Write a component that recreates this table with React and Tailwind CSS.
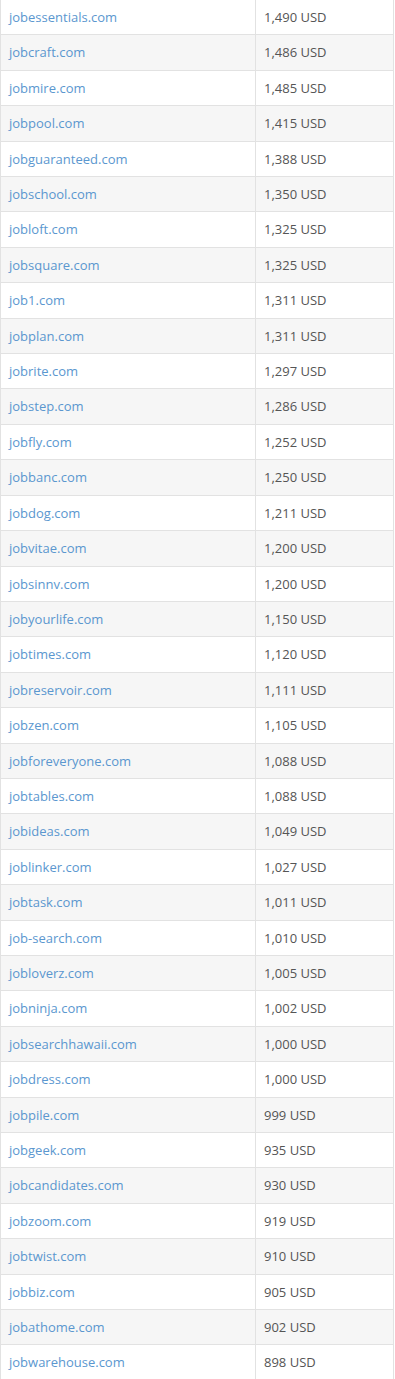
import React from "react";

const rows = [
  ["jobessentials.com", "1,490 USD"],
  ["jobcraft.com", "1,486 USD"],
  ["jobmire.com", "1,485 USD"],
  ["jobpool.com", "1,415 USD"],
  ["jobguaranteed.com", "1,388 USD"],
  ["jobschool.com", "1,350 USD"],
  ["jobloft.com", "1,325 USD"],
  ["jobsquare.com", "1,325 USD"],
  ["job1.com", "1,311 USD"],
  ["jobplan.com", "1,311 USD"],
  ["jobrite.com", "1,297 USD"],
  ["jobstep.com", "1,286 USD"],
  ["jobfly.com", "1,252 USD"],
  ["jobbanc.com", "1,250 USD"],
  ["jobdog.com", "1,211 USD"],
  ["jobvitae.com", "1,200 USD"],
  ["jobsinnv.com", "1,200 USD"],
  ["jobyourlife.com", "1,150 USD"],
  ["jobtimes.com", "1,120 USD"],
  ["jobreservoir.com", "1,111 USD"],
  ["jobzen.com", "1,105 USD"],
  ["jobforeveryone.com", "1,088 USD"],
  ["jobtables.com", "1,088 USD"],
  ["jobideas.com", "1,049 USD"],
  ["joblinker.com", "1,027 USD"],
  ["jobtask.com", "1,011 USD"],
  ["job-search.com", "1,010 USD"],
  ["jobloverz.com", "1,005 USD"],
  ["jobninja.com", "1,002 USD"],
  ["jobsearchhawaii.com", "1,000 USD"],
  ["jobdress.com", "1,000 USD"],
  ["jobpile.com", "999 USD"],
  ["jobgeek.com", "935 USD"],
  ["jobcandidates.com", "930 USD"],
  ["jobzoom.com", "919 USD"],
  ["jobtwist.com", "910 USD"],
  ["jobbiz.com", "905 USD"],
  ["jobathome.com", "902 USD"],
  ["jobwarehouse.com", "898 USD"],
];

export default function App() {
  return (
    <div className="bg-white" style={{ fontFamily: '"Open Sans", "Liberation Sans", sans-serif' }}>
      <table className="w-[394px] border-collapse border border-[#e2e2e2] text-[13px] leading-[18.4px] -mt-px">
        <tbody>
          {rows.map(([domain, price], i) => (
            <tr key={domain} className={i % 2 === 1 ? "bg-[#f6f6f6]" : "bg-white"}>
              <td className="w-[255px] border-t border-[#e2e2e2] px-2 py-2 align-top">
                <a href="#" className="text-[#5b97cf]">
                  {domain}
                </a>
              </td>
              <td className="border-t border-l border-[#e2e2e2] px-2 py-2 align-top text-[#555]">
                {price}
              </td>
            </tr>
          ))}
        </tbody>
      </table>
    </div>
  );
}
